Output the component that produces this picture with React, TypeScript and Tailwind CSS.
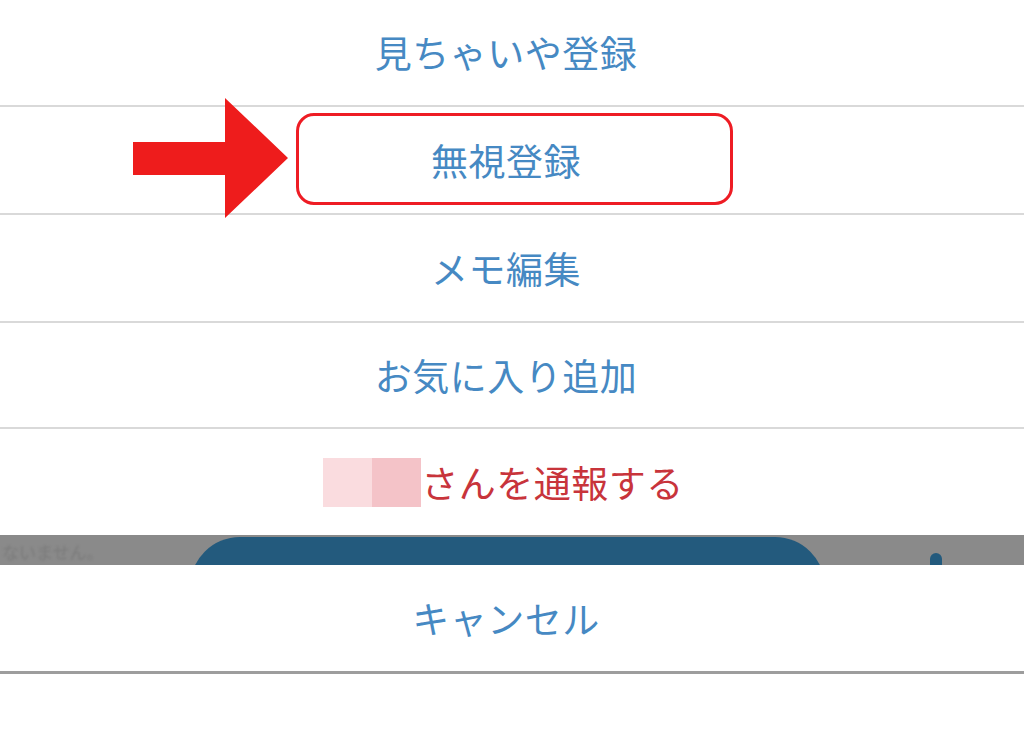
const font = { fontFamily: '"Noto Sans CJK JP", "Noto Sans", sans-serif' };

function Row({ children, className = 'h-[108px]' }: { children: React.ReactNode; className?: string }) {
  return (
    <div className={`relative flex items-center justify-center pr-[12px] border-b-2 border-[#d9d9d9] ${className}`}>
      {children}
    </div>
  );
}

function Label({ text, red = false }: { text: string; red?: boolean }) {
  return (
    <span
      className={`text-[37px] font-normal tracking-[0.5px] leading-none ${red ? 'text-[#c8343b]' : 'text-[#4689c3]'}`}
    >
      {text}
    </span>
  );
}

export default function App() {
  return (
    <div className="relative w-[1024px] h-[734px] bg-white overflow-hidden" style={font}>
      {/* action sheet */}
      <div className="flex flex-col">
        <Row className="h-[107px]">
          <Label text="見ちゃいや登録" />
        </Row>
        <Row>
          <Label text="無視登録" />
          <div className="absolute left-[296px] top-[6px] w-[437px] h-[92px] rounded-[18px] border-[3px] border-[#ee1c24]" />
        </Row>
        <Row>
          <Label text="メモ編集" />
        </Row>
        <Row className="h-[106px]">
          <Label text="お気に入り追加" />
        </Row>
        <div className="h-[106px] flex items-center justify-center pr-[17px]">
          <div className="flex h-[49px] w-[98px]">
            <div className="w-1/2 bg-[#fadcdf]" />
            <div className="w-1/2 bg-[#f4c3c8]" />
          </div>
          <Label text="さんを通報する" red />
        </div>

        {/* page behind the sheet */}
        <div className="relative h-[30px] bg-[#8a8a8a] overflow-hidden">
          <span className="absolute left-[2px] top-[4px] text-[17px] text-[#7b7b7b] blur-[1px]">ないません。</span>
          <div className="absolute left-[190px] top-[2px] w-[635px] h-[100px] rounded-full bg-[#235a7d]" />
          <div className="absolute left-[930px] top-[18px] w-[12px] h-[18px] rounded-full bg-[#235a7d]" />
        </div>

        <div className="h-[109px] flex items-center justify-center pr-[12px] border-b-[3px] border-[#9d9d9d]">
          <Label text="キャンセル" />
        </div>
      </div>

      {/* annotation arrow */}
      <svg className="absolute left-[133px] top-[98px]" width="156" height="121" viewBox="0 0 156 121">
        <polygon points="0,44 92,44 92,0 155,60 92,120 92,77 0,77" fill="#ee1c1c" />
      </svg>
    </div>
  );
}
